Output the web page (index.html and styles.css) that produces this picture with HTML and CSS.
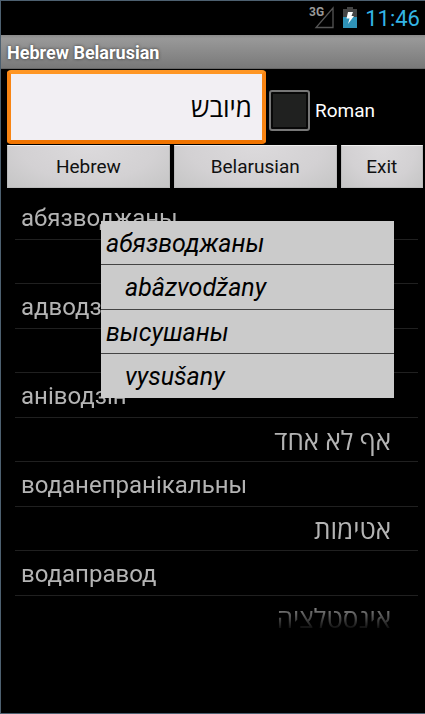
FILE: index.html
```html
<!DOCTYPE html>
<html lang="en">
<head>
  <meta charset="UTF-8">
  <meta name="viewport" content="width=device-width, initial-scale=1.0">
  <title>Hebrew Belarusian</title>
  <link rel="stylesheet" href="styles.css">
</head>
<body>
  <div class="status-bar">
    <svg class="signal" width="26" height="24" viewBox="0 0 26 24">
      <text class="network" x="0" y="10">3G</text>
      <path d="M7 21.500H24V2Z" fill="none" stroke="#555" stroke-width="1.300"/>
    </svg>
    <svg width="14" height="24" viewBox="0 0 14 24">
      <path d="M4 1H10V3H14V11H0V3H4Z" fill="#444"/>
      <path d="M0 11H14V22H0Z" fill="#2f93b8"/>
      <path d="M5 6H10L8.500 10H11L5 18L6.500 12.500H3.500Z" fill="#fff"/>
    </svg>
    <span class="clock">11:46</span>
  </div>

  <h1>Hebrew Belarusian</h1>

  <form class="search">
    <div class="query">
      <input type="text" class="word" dir="rtl" lang="he" value="מיובש" aria-label="Word">
      <label class="roman">
        <input type="checkbox">
        Roman
      </label>
    </div>
    <div class="buttons">
      <button type="button" class="hebrew">Hebrew</button>
      <button type="button" class="belarusian">Belarusian</button>
      <button type="button" class="exit">Exit</button>
    </div>
  </form>

  <main class="results">
    <ul class="words">
      <li>абязводжаны</li>
      <li lang="he" dir="rtl">מיובש</li>
      <li>адводзіць</li>
      <li lang="he" dir="rtl">להסיט</li>
      <li>аніводзін</li>
      <li lang="he" dir="rtl">אף לא אחד</li>
      <li>воданепранікальны</li>
      <li lang="he" dir="rtl">אטימות</li>
      <li>водаправод</li>
      <li lang="he" dir="rtl">אינסטלציה</li>
    </ul>

    <ul class="popup">
      <li>абязводжаны</li>
      <li class="translit">abâzvodžany</li>
      <li>высушаны</li>
      <li class="translit">vysušany</li>
    </ul>
  </main>
</body>
</html>
```

FILE: styles.css
```css
* {
  box-sizing: border-box;
}
html {
  background-color: #000;
}
body {
  margin: 0;
  min-height: 100vh;
  border: 1px solid #4d6070;
  border-right: none;
  background-color: #000;
  color: #fff;
  font-family: Roboto, "Open Sans", sans-serif;
}
ul {
  list-style: none;
  margin: 0;
  padding: 0;
}
.status-bar {
  display: flex;
  align-items: center;
  justify-content: flex-end;
  gap: 8px;
  height: 34px;
  padding-right: 5px;
}
.network {
  fill: #999;
  font-size: 12px;
  font-weight: bold;
}
.clock {
  color: #33b5e5;
  font-size: 22px;
}
h1 {
  margin: 0;
  height: 34px;
  padding-left: 6px;
  background: linear-gradient(#8a8a8a, #999 10%, #797979);
  border-bottom: 1px solid #666;
  font-size: 18px;
  line-height: 35px;
  text-shadow: 0 0 3px #333;
}
.search {
  padding: 1px 2px 0 6px;
}
.query {
  display: flex;
  align-items: center;
  gap: 3px;
}
.word {
  flex: 3;
  min-width: 0;
  height: 74px;
  padding: 0 10px;
  border: 4px solid #f88413;
  border-top-color: #ff9624;
  border-bottom-color: #f07400;
  border-radius: 4px;
  background-color: #f2eff3;
  color: #000;
  font: 26px Roboto, "Open Sans", sans-serif;
  outline: none;
}
.roman {
  flex: 2;
  display: flex;
  align-items: center;
  gap: 5px;
  padding-top: 6px;
  font-size: 19px;
}
.roman input {
  appearance: none;
  width: 41px;
  height: 41px;
  margin: 0;
  border: 2px solid #777;
  border-radius: 3px;
  background-color: #202120;
  box-shadow: inset 0 0 0 2px #080808;
}
.roman input:checked {
  background-color: #33b5e5;
}
.buttons {
  display: flex;
  gap: 4px;
  margin-top: 1px;
}
button {
  height: 43px;
  padding: 0;
  border: 1px solid #bbb;
  border-top-color: #eee;
  background: radial-gradient(ellipse at 50% 0, #dcdadc, #d3d1d3 60%, #c5c5c5);
  color: #111;
  font: 19px Roboto, "Open Sans", sans-serif;
}
.hebrew,
.belarusian {
  flex: 2;
}
.exit {
  flex: 1;
}
.results {
  position: relative;
  padding: 7px 7px 0 14px;
}
/* the list fades out at its lower end */
.words {
  -webkit-mask-image: linear-gradient(#000 404px, transparent 436px);
  mask-image: linear-gradient(#000 404px, transparent 436px);
}
.words li {
  height: 44px;
  padding-left: 6px;
  border-bottom: 1px solid #202020;
  color: #b4b4b4;
  font-size: 24px;
  line-height: 46px;
}
.words li:nth-child(odd) {
  height: 45px;
}
.words li:lang(he) {
  padding-right: 27px;
  font-size: 26px;
}
.popup {
  position: absolute;
  top: 33px;
  left: 100px;
  right: 31px;
  background-color: #cbcbcb;
}
.popup li {
  height: 44px;
  padding-left: 5px;
  border-bottom: 1px solid #444;
  color: #000;
  font-size: 25px;
  font-style: italic;
  line-height: 46px;
}
.popup li:nth-child(2) {
  height: 45px;
}
.popup li:last-child {
  border-bottom: none;
}
.popup .translit {
  padding-left: 24px;
}
```
